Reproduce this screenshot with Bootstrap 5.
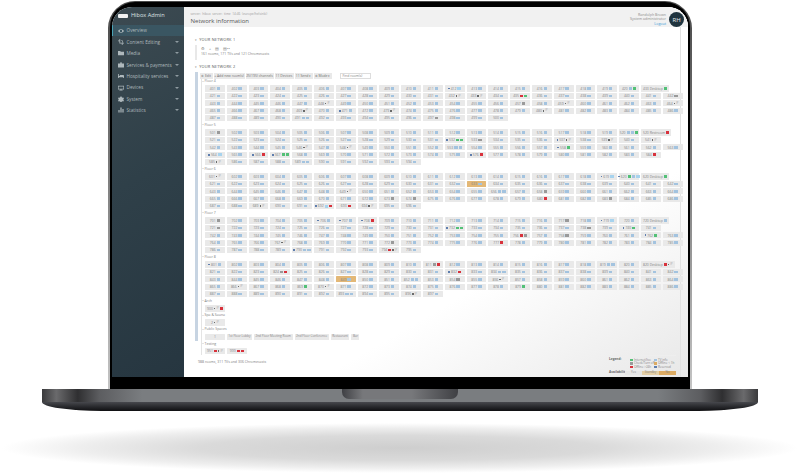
<!DOCTYPE html>
<html lang="en">
<head>
  <meta charset="UTF-8" />
  <title>Hibox Admin - Network information</title>
  <link href="https://cdn.jsdelivr.net/npm/bootstrap@5.3.3/dist/css/bootstrap.min.css" rel="stylesheet">
  <style>
    html, body { height: 473px; overflow: hidden; background: #fff; }
    body { font-family: "Open Sans", "Liberation Sans", sans-serif; line-height: 1; color: #666; }

    /* laptop frame */
    .lid { width: 584px; height: 388px; margin: 1px 0 0 108px; padding: 1px 2px 0; border-radius: 27px 27px 0 0; background: linear-gradient(#4a4a4a, #777 40%, #c4c4c4); }
    .bezel { height: 100%; padding: 5px 2px 12px; border-radius: 25px 25px 0 0; background: #000; }
    .screen { height: 370px; border-radius: 20px 20px 0 0; overflow: hidden; background: #fff; }
    .base { width: 716px; height: 22px; margin-left: 42px; position: relative; }
    .base-top { height: 13px; background: linear-gradient(90deg, #3a3a3c 0, #6a6a6c 2%, #2f2f31 5%, #5c5d60 8%, #7a7d80 14%, #7a7d80 86%, #5c5d60 92%, #2f2f31 95%, #6a6a6c 98%, #3a3a3c 100%); }
    .base-bottom { height: 9px; background: linear-gradient(#47484d, #2c2d31 45%, #0f0f11); border-radius: 0 0 60px 60px / 0 0 9px 9px; }
    .notch { position: absolute; left: 300px; top: 0; width: 116px; height: 10px; border-radius: 0 0 7px 7px; background: linear-gradient(90deg, #3f4044, #77787b 18%, #77787b 60%, #3f4044); }
    .floor-shadow { width: 796px; height: 50px; margin: 12px 0 0 2px; background: radial-gradient(ellipse closest-side, #cecece 0, #dadada 50%, #eee 80%, #fff 100%); }

    /* sidebar */
    .side { width: 72px; flex-shrink: 0; background: linear-gradient(150deg, #3c4a51 0, #2f4049 45%, #263640 100%); color: #aeb8bc; font-size: 4.7px; }
    .brand { height: 18px; padding-left: 6px; color: #dfe3e5; font-size: 5.6px; gap: 3px; }
    .brand-logo { width: 10px; height: 4px; background: #f2f2f2; border-radius: 1px; }
    .side-item { height: 11.4px; padding: 0 5px 0 5px; gap: 2.5px; border-left: 1px solid transparent; }
    .side-item.on { background: #3a5662; border-left-color: #4aa3b5; }
    .side-item svg { width: 6px; height: 6px; flex-shrink: 0; fill: #aeb8bc; }
    .side-caret { width: 0; height: 0; margin-left: auto; border-left: 2px solid transparent; border-right: 2px solid transparent; border-top: 2px solid #8f9ba1; }

    /* main */
    .main-col { min-width: 0; background: linear-gradient(150deg, #fff 68%, #e8e8e8 100%); }
    .top-bar { height: 20px; padding: 0 4px 0 6.5px; background: #f1f1f1; }
    .top-left { padding-top: 6px; }
    .crumbs { font-size: 3.2px; color: #a0a0a0; margin-bottom: 1.5px; word-spacing: .8px; }
    .page-title { font-size: 6px; color: #555; margin: 0; font-weight: 400; }
    .user-info { font-size: 3.6px; color: #8c8c8c; text-align: right; line-height: 4.4px; margin: 6px 3px 0 0; }
    .user-info a { color: #3d9bd8; text-decoration: none; }
    .avatar { width: 15px; height: 15px; margin-top: 5px; border-radius: 50%; background: #20343f; color: #e8ecee; font-size: 6px; }
    .page-body { height: 350px; border-right: 1px solid #e2e2e2; margin-right: 7px; padding: 11px 0 0 11px; position: relative; }
    .net-title { font-size: 3.9px; color: #555; letter-spacing: .2px; height: 5px; margin-bottom: 2px; }
    .net-title::before { content: "\25BE"; font-size: 3px; margin: 0 2px 0 0; color: #888; }
    .net-one { border-left: 2px solid #e8e8e8; padding: 1px 0 0 4px; height: 15px; margin-bottom: 5px; font-size: 3.5px; color: #808080; }
    .net-icons { gap: 4px; height: 6px; font-size: 3.6px; }
    .net-two { border-left: 3px solid #c7d4e2; padding: 1px 0 0 1.5px; height: 269px; }

    .tool-row { gap: 1px; height: 5.5px; }
    .tool-btn { height: 5.5px; background: #e9e9e9; font-size: 3.4px; color: #707070; white-space: nowrap; }
    .find-box { width: 31px; height: 5.5px; margin-left: 7px; border: 1px solid #ddd; font-size: 3.4px; color: #808080; padding-left: 2px; background: #fff; }

    .floor-list { border-left: 1px solid #e4e4e4; margin-left: 1px; }
    .floor-name { font-size: 3.5px; color: #808080; height: 6.8px; padding-left: 3px; padding-top: .5px; position: relative; }
    .floor-name::before { content: ""; position: absolute; left: 0; top: 2px; width: 2px; border-top: 1px solid #e4e4e4; }
    .room-row { gap: 2px; height: 7.45px; padding-left: 3.5px; }
    .room { width: 19.8px; height: 6.3px; gap: 1px; flex-shrink: 0; background: #e9e9e9; border-radius: .5px; font-size: 3.4px; color: #858585; white-space: nowrap; }
    .room.wide { width: auto; padding: 0 2px; }
    .room.pub-room { width: auto; padding: 0 1.5px; font-size: 3.1px; }
    .room.busy { background: #e3b877; }
    .dot-t, .dot-big, .dot-k, .dot-g, .dot-r, .dot-d, .dot-m { display: inline-block; flex-shrink: 0; }
    .dot-t { width: 3.4px; height: 2.6px; background: #a3c3df; }
    .dot-big { width: 3.8px; height: 3px; background: #a7d3ee; }
    .dot-k { width: 3.4px; height: 2.6px; background: #9a9a9a; }
    .dot-g { width: 3px; height: 2.6px; background: #53c077; }
    .dot-r { width: 3px; height: 2.6px; background: #d8323c; }
    .dot-d { width: 1.6px; height: 1.6px; background: #5f7eae; }
    .dot-m { width: 1.5px; height: 1.5px; background: #6a6a6a; }
    .room-ip { font-size: 2.6px; color: #a5a5a5; }

    .foot-line { position: absolute; left: 14px; top: 333px; font-size: 3.5px; color: #808080; }
    .legend-wrap { position: absolute; right: 4px; bottom: 2px; width: 67px; border-top: 1px solid #eee; padding-top: 2px; font-size: 3px; color: #858585; }
    .legend-title { font-weight: 700; color: #666; width: 21px; flex-shrink: 0; font-size: 3.2px; }
    .avail-title { width: 16px; }
    .legend-grid { display: grid; grid-template-columns: 24px 22px; }
    .legend-grid span { display: flex; align-items: center; height: 3.6px; white-space: nowrap; }
    .legend-block { margin-bottom: 1.5px; }
    .legend-key { display: inline-block; width: 2.5px; height: 2.5px; margin-right: 1.5px; }
    .avail-cell { flex: 1 1 0; height: 4.5px; background: #e6e6e6; font-size: 3px; }
    .avail-mid { background: #e4cfa6; }
    .avail-end { background: #dcab63; }
  </style>
</head>
<body>

<div class="lid">
  <div class="bezel">
    <div class="screen d-flex">

      <!-- Sidebar -->
      <aside class="side">
        <div class="brand d-flex align-items-center"><span class="brand-logo"></span>Hibox Admin</div>
        <div id="sideNav"></div>
      </aside>

      <!-- Main column -->
      <div class="main-col flex-grow-1">
        <div class="top-bar d-flex align-items-start">
          <div class="top-left flex-grow-1">
            <div class="crumbs">server: hibox server: time 14:46 (europe/helsinki)</div>
            <h1 class="page-title">Network information</h1>
          </div>
          <div class="user-info">Randolph Brown<br>System administrator<br><a href="#">Logout</a></div>
          <div class="avatar d-flex align-items-center justify-content-center">RH</div>
        </div>

        <div class="page-body">
          <div class="net-title">YOUR NETWORK 1</div>
          <div class="net-one">
            <div class="net-icons d-flex align-items-center"><span>&#9881;</span><span>+</span><span>&#9636;</span><span>&#9636;&#8226;&#8226;</span></div>
            <div>161 rooms, 171 TVs and 121 Chromecasts</div>
          </div>

          <div class="net-title">YOUR NETWORK 2</div>
          <div class="net-two">
            <div class="tool-row d-flex">
              <span class="tool-btn d-flex align-items-center justify-content-center" id="b1">&#9881; Edit</span>
              <span class="tool-btn d-flex align-items-center justify-content-center" id="b2">+ Add new room(s)</span>
              <span class="tool-btn d-flex align-items-center justify-content-center" id="b3">25(195) channels</span>
              <span class="tool-btn d-flex align-items-center justify-content-center" id="b4">11 Devices</span>
              <span class="tool-btn d-flex align-items-center justify-content-center" id="b5">11 Send &#9662;</span>
              <span class="tool-btn d-flex align-items-center justify-content-center" id="b6">&#9881; Mode &#9662;</span>
              <span class="find-box d-flex align-items-center">Find room(s)</span>
            </div>
            <div class="floor-list" id="floorList"></div>
          </div>

          <div class="foot-line">988 rooms, 311 TVs and 306 Chromecasts</div>

          <div class="legend-wrap">
            <div class="legend-block d-flex">
              <span class="legend-title">Legend:</span>
              <div class="legend-grid">
                <span><i class="legend-key dot-g"></i>Internet/live</span><span><i class="legend-key dot-t"></i>TV info</span>
                <span><i class="legend-key dot-k"></i>Check/Turn off</span><span><i class="legend-key avail-end"></i>Offline &lt; 1h</span>
                <span><i class="legend-key dot-r"></i>Offline &gt;24h</span><span><i class="legend-key dot-d"></i>Reserved</span>
              </div>
            </div>
            <div class="d-flex align-items-center">
              <span class="legend-title avail-title">Availability:</span>
              <span class="avail-cell d-flex align-items-center justify-content-center">Yes</span>
              <span class="avail-cell avail-mid d-flex align-items-center justify-content-center">Standby</span>
              <span class="avail-cell avail-end d-flex align-items-center justify-content-center">No</span>
            </div>
          </div>
        </div>
      </div>
    </div>
  </div>
</div>

<div class="base">
  <div class="base-top"></div>
  <div class="base-bottom"></div>
  <div class="notch"></div>
</div>
<div class="floor-shadow"></div>

<script src="https://cdn.jsdelivr.net/npm/bootstrap@5.3.3/dist/js/bootstrap.bundle.min.js"></script>

<script>
  // Sidebar
  const SIDE_ITEMS = [
    ["Overview", "M0 3c1.5-2.4 4.5-2.4 6 0-1.5 2.4-4.5 2.4-6 0zm3 1.2a1.2 1.2 0 100-2.4 1.2 1.2 0 000 2.4z", false],
    ["Content Editing", "M1.4 0h.8v3.8H6v.8H4.6V6h-.8V4.6H1.4V2.2H0v-.8h1.4zm1.4 1.4h2v2h-.7V2.1H2.8z", true],
    ["Media", "M0 1h2.2l.6.7H6V5.3H0z", true],
    ["Services & payments", "M2 .6h2v1h2v4H0v-4h2zm.6.6v.4h.8v-.4zM2.5 3h1v1h-1z", true],
    ["Hospitality services", "M0 1h.8v2h1V2h3.4c.5 0 .8.4.8.8V5h-.8V4.2H.8V5H0z", true],
    ["Devices", "M0 .8h6v3.6H3.6v.6h1v.4H1.4V5h1v-.6H0zm.6.6v2.4h4.8V1.4z", true],
    ["System", "M2.4 .4h1.2l.2.9.8.4.8-.3.6 1-.6.6v.9l.6.6-.6 1-.8-.3-.8.4-.2.9H2.4l-.2-.9-.8-.4-.8.3-.6-1 .6-.6v-.9L0 2.4l.6-1 .8.3.8-.4z", true],
    ["Statistics", "M.4 3h1.2v2.6H.4zM2.4 .6h1.2v5H2.4zM4.4 2h1.2v3.6H4.4z", true]
  ];

  document.getElementById("sideNav").innerHTML = SIDE_ITEMS.map((item, i) => `
    <div class="side-item d-flex align-items-center${i === 0 ? " on" : ""}">
      <svg viewBox="0 0 6 6"><path d="${item[1]}"/></svg>${item[0]}${item[2] ? '<span class="side-caret"></span>' : ""}
    </div>`).join("");

  // Room chips: letters in a code are the marks after the room number.
  // d dot before, t tv, T big tv, k grey tv, g green, r red, m ip mark, o orange chip
  const FLOORS = [
    { name: "Floor 4", start: 401, rows: [
      [20, { 11: "dT", 19: "tg" }, "433 Desktop:g"],
      [22, { 11: "m", 12: "m", 14: "rg", 21: "k" }],
      [22, { 5: "m", 14: "k", 16: "m", 21: "m" }],
      [22, { 4: "m", 6: "dt", 8: "m", 15: "m" }],
      [14, { 4: "tt", 10: "k" }]
    ]},
    { name: "Floor 5", start: 501, rows: [
      [20, { 0: "k", 19: "ttg" }, "520 Restroom:r"],
      [21, { 11: "dgg", 12: "k", 16: "dm", 18: "m", 20: "m" }],
      [22, { 4: "m", 6: "m", 11: "tt", 16: "dg" }],
      [21, { 0: "dT", 2: "dr", 3: "dgg", 12: "dr", 20: "r" }],
      [10, { 0: "m", 4: "tt" }]
    ]},
    { name: "Floor 6", start: 601, rows: [
      [20, { 0: "m", 18: "dT", 19: "dgtT" }, "620 Desktop:g"],
      [22, { 12: "ot" }],
      [22, { 6: "m", 13: "tt", 15: "k" }],
      [22, { 8: "k", 9: "k", 15: "r", 18: "k" }],
      [10, { 2: "m", 5: "dTr", 6: "r", 7: "m" }]
    ]},
    { name: "Floor 7", start: 701, rows: [
      [20, { 0: "k", 5: "dt", 6: "dt", 7: "dr", 16: "k", 18: "dT" }, "720 Desktop:t"],
      [21, { 0: "k", 11: "dgg", 17: "k", 19: "dg" }],
      [22, { 14: "rk", 16: "k", 20: "dg" }],
      [22, { 3: "m", 8: "k", 13: "r" }],
      [10, { 4: "dtt", 8: "rm" }]
    ]},
    { name: "Floor 8", start: 801, rows: [
      [20, { 0: "dt", 10: "kr", 18: "tt" }, "820 Desktop:rm"],
      [22, { 3: "kr", 11: "dr", 13: "tt" }],
      [22, { 6: "ot", 9: "tt", 11: "k", 13: "m" }],
      [22, { 1: "m", 4: "g", 5: "m", 14: "g" }],
      [11, { 6: "tt", 9: "m" }]
    ]},
    { name: "Arch", start: 900, rows: [[1, { 0: "mr" }]] },
    { name: "Spa & Sauna", start: 2, rows: [[1, { 0: "m" }]] }
  ];

  const MARKS = { t: "dot-t", T: "dot-big", k: "dot-k", g: "dot-g", r: "dot-r", m: "dot-m" };

  function roomChip(label, code, wide) {
    const before = code.includes("d") ? '<i class="dot-d"></i>' : "";
    const marks = [...code].filter(c => MARKS[c])
      .map(c => `<i class="${MARKS[c]}"></i>` + (c === "m" ? '<span class="room-ip">IP</span>' : "")).join("");
    const cls = (code.includes("o") ? " busy" : "") + (wide ? " wide" : "");
    return `<span class="room d-flex align-items-center justify-content-center${cls}">${before}${label}${marks}</span>`;
  }

  let html = "";
  FLOORS.forEach(floor => {
    html += `<div class="floor-name">${floor.name}</div>`;
    let no = floor.start;
    floor.rows.forEach(row => {
      let chips = "";
      for (let i = 0; i < row[0]; i++) chips += roomChip(no++, row[1][i] || "t");
      if (row[2]) {
        const parts = row[2].split(":");
        chips += roomChip(parts[0], parts[1], true);
      }
      html += `<div class="room-row d-flex">${chips}</div>`;
    });
  });

  // Public spaces and the testing rooms
  const publicRooms = ["1", "1st Floor Lobby", "2nd Floor Meeting Room", "2nd Floor Conference", "Restaurant", "Bar"];
  html += `<div class="floor-name">Public Spaces</div>`;
  html += `<div class="room-row d-flex">${publicRooms.map((r, i) => `<span class="room d-flex align-items-center justify-content-center${i ? " pub-room" : ""}">${r}</span>`).join("")}</div>`;
  html += `<div class="floor-name">Testing</div>`;
  html += `<div class="room-row d-flex">${roomChip(951, "rm")}${roomChip(999, "rr")}</div>`;
  document.getElementById("floorList").innerHTML = html;

  // Toolbar widths follow the buttons of the real page
  [13, 31, 28, 19, 18, 18].forEach((w, i) => { document.getElementById("b" + (i + 1)).style.width = w + "px"; });
</script>

</body>
</html>
